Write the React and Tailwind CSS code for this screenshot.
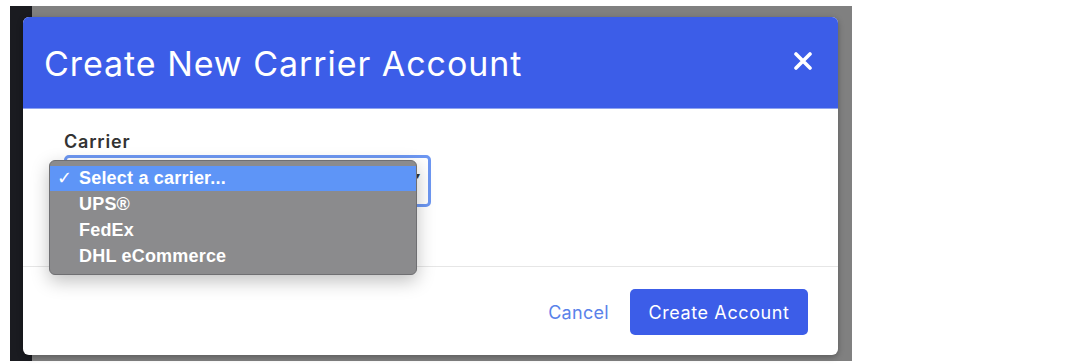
import React from "react";

// Native select menu as drawn by the browser, laid over the modal body
function CarrierMenu() {
  const options = ["UPS®", "FedEx", "DHL eCommerce"];
  return (
    <div
      className="absolute left-[26px] top-[51px] w-[368px] rounded-[6px] bg-[#8b8b8d] border border-[#6f6f72] py-[5px] shadow-[0_6px_18px_rgba(0,0,0,0.25)]"
      style={{ fontFamily: '"Liberation Sans", Arial, sans-serif' }}
    >
      <div className="flex items-center h-[25px] bg-[#5e95f7] text-white text-[18px] font-bold tracking-[0.2px]">
        <span className="w-[29px] pl-[7px] font-normal text-[18px]">✓</span>
        <span>Select a carrier...</span>
      </div>
      {options.map((o) => (
        <div key={o} className="flex items-center h-[26px] pl-[29px] text-white text-[18px] font-bold tracking-[0.2px]">
          {o}
        </div>
      ))}
    </div>
  );
}

export default function App() {
  return (
    <div className="min-h-screen bg-white pl-[10px] pt-[6px]" style={{ fontFamily: "Inter, sans-serif" }}>
      <div className="w-[842px] h-[355px] bg-[linear-gradient(to_right,#1a1b20_22px,#808080_22px)] pl-[13px] pt-[11px]">
        <div className="w-[815px] h-[338px] bg-white rounded-[6px] overflow-hidden flex flex-col shadow-[0_2px_6px_rgba(0,0,0,0.3)]">
          {/* header */}
          <div className="h-[92px] shrink-0 bg-[#3c5de8] flex items-center justify-between pl-[21px] pr-[26px] border-b border-[#8fa3f0]">
            <h1 className="text-white text-[34px] font-normal tracking-[0.95px] mt-[2px]">Create New Carrier Account</h1>
            <svg width="18" height="18" viewBox="0 0 18 18" className="mt-[-4px]">
              <path d="M2 2L16 16M16 2L2 16" stroke="white" strokeWidth="3.6" strokeLinecap="round" />
            </svg>
          </div>

          {/* body */}
          <div className="relative h-[158px] shrink-0 border-b border-[#e6e6e6] px-[41px] pt-[23px]">
            <label className="block text-[18px] font-semibold text-[#333] leading-[20px] tracking-[0.8px]">Carrier</label>
            <div className="mt-[3px] w-[367px] h-[52px] rounded-[5px] border-[3px] border-[#6d97f2] bg-white flex items-center justify-end pr-[8px]">
              <span className="text-[10px] text-[#333] mt-[-12px]">▾</span>
            </div>
            <CarrierMenu />
          </div>

          {/* footer */}
          <div className="flex-1 flex items-center justify-end gap-[21px] pr-[30px] pt-[2px]">
            <button className="text-[18px] text-[#5a82ea] tracking-[0.3px]">Cancel</button>
            <button className="w-[178px] h-[46px] rounded-[5px] bg-[#3c5de8] text-white text-[18px] tracking-[0.6px]">
              Create Account
            </button>
          </div>
        </div>
      </div>
    </div>
  );
}
